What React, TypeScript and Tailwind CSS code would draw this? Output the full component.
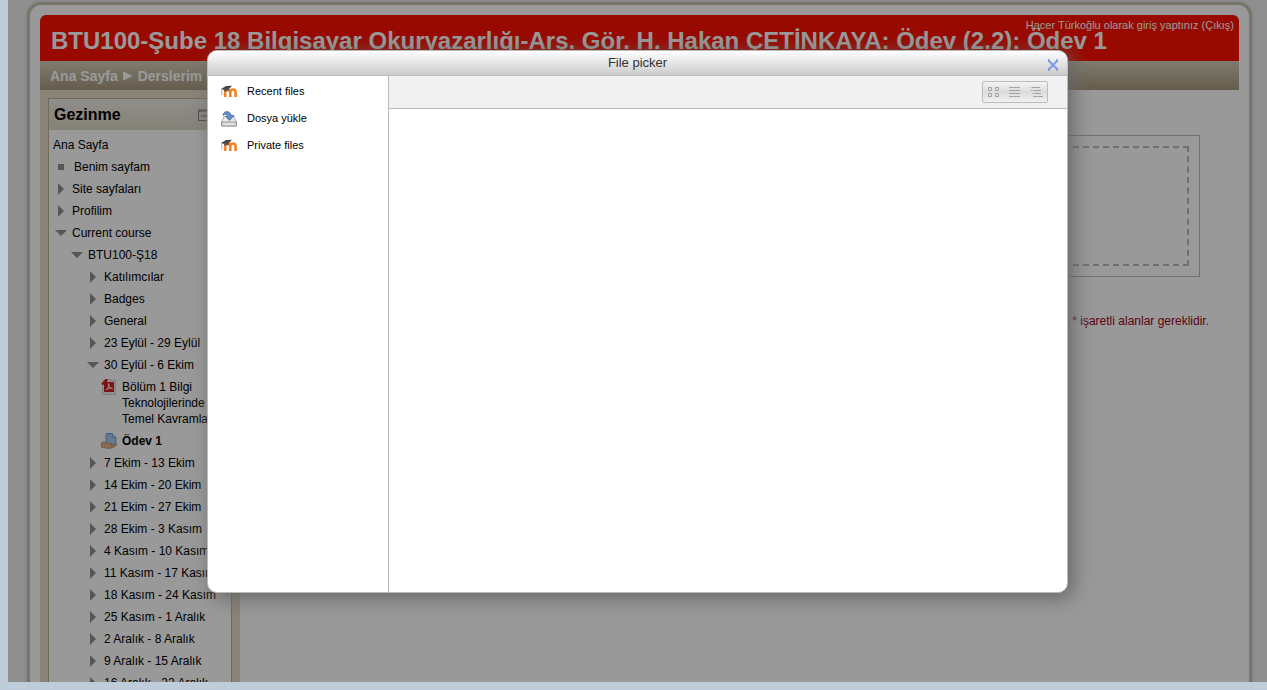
import React from "react";

type NodeKind = "closed" | "open" | "leaf" | "pdf" | "assignment";

interface TreeNode {
  label: string;
  lines?: string[];
  kind: NodeKind;
  current?: boolean;
  children?: TreeNode[];
}

const closed = (label: string): TreeNode => ({ label, kind: "closed" });

const TREE: TreeNode[] = [
  { label: "Benim sayfam", kind: "leaf" },
  closed("Site sayfaları"),
  closed("Profilim"),
  {
    label: "Current course",
    kind: "open",
    children: [
      {
        label: "BTU100-Ş18",
        kind: "open",
        children: [
          closed("Katılımcılar"),
          closed("Badges"),
          closed("General"),
          closed("23 Eylül - 29 Eylül"),
          {
            label: "30 Eylül - 6 Ekim",
            kind: "open",
            children: [
              {
                label: "Bölüm 1",
                lines: ["Bölüm 1 Bilgi", "Teknolojilerinde", "Temel Kavramlar"],
                kind: "pdf",
              },
              { label: "Ödev 1", kind: "assignment", current: true },
            ],
          },
          closed("7 Ekim - 13 Ekim"),
          closed("14 Ekim - 20 Ekim"),
          closed("21 Ekim - 27 Ekim"),
          closed("28 Ekim - 3 Kasım"),
          closed("4 Kasım - 10 Kasım"),
          closed("11 Kasım - 17 Kasım"),
          closed("18 Kasım - 24 Kasım"),
          closed("25 Kasım - 1 Aralık"),
          closed("2 Aralık - 8 Aralık"),
          closed("9 Aralık - 15 Aralık"),
          closed("16 Aralık - 22 Aralık"),
        ],
      },
    ],
  },
];

function NodeIcon({ kind }: { kind: NodeKind }) {
  return (
    <svg className="size-4 shrink-0" viewBox="0 0 16 16" aria-hidden="true">
      {kind === "closed" && <path d="M5 2 L11 8 L5 14 Z" fill="#8f8f8f" />}
      {kind === "open" && <path d="M2 5 H14 L8 11 Z" fill="#8f8f8f" />}
      {kind === "leaf" && <rect x="5" y="5" width="6" height="6" fill="#8f8f8f" />}
      {kind === "pdf" && (
        <>
          <path d="M3 1 H14.5 V15.5 H1.5 V5 Z" fill="#f2f0f0" stroke="#c9c5c5" strokeWidth=".8" />
          <path d="M0 5 L4.5 0 H7 L6 2.5 L2.5 6 Z" fill="#d8231c" />
          <rect x="3" y="3" width="10" height="10" fill="#d31f1f" />
          <path
            d="M5 11 C7.5 9 8 6.500 7.600 4.500 C8 8 9.500 9.300 11.500 9.600 C9 8.800 6.500 9.300 5 11"
            fill="none"
            stroke="#fff"
            strokeWidth=".9"
          />
        </>
      )}
      {kind === "assignment" && (
        <>
          <path d="M5 .6 H11.500 L15 4 V12.500 H5 Z" fill="#a5cbee" stroke="#6c9ccb" strokeWidth=".9" />
          <path d="M11.500 .6 V4 H15" fill="#dcecfa" stroke="#6c9ccb" strokeWidth=".8" />
          <path
            d="M.5 9.500 C3 8.500 5 9.200 7 10.500 L10.500 10.800 C11.500 11.200 11 12.200 10 12.300 L14.500 11.300 C16 11.500 15.800 12.600 14.500 13.300 L9.500 15.300 C6 15.800 4 14.500 .5 14.200 Z"
            fill="#e3b686"
            stroke="#b98450"
            strokeWidth=".7"
          />
        </>
      )}
    </svg>
  );
}

function Tree({ nodes }: { nodes: TreeNode[] }) {
  return (
    <ul>
      {nodes.map((node) => (
        <li key={node.label}>
          <a
            href="#"
            className={`flex py-[3px] leading-4 whitespace-nowrap ${
              node.kind === "closed" || node.kind === "open" ? "gap-[3px]" : "gap-[5px]"
            } ${node.current ? "font-bold" : ""}`}
          >
            <NodeIcon kind={node.kind} />
            <span>
              {node.lines
                ? node.lines.map((line) => (
                    <span key={line} className="block">
                      {line}
                    </span>
                  ))
                : node.label}
            </span>
          </a>
          {node.children && (
            <div className="pl-4">
              <Tree nodes={node.children} />
            </div>
          )}
        </li>
      ))}
    </ul>
  );
}

function MoodleIcon() {
  return (
    <svg className="size-4 shrink-0" viewBox="0 0 16 16" aria-hidden="true">
      <path
        d="M4.200 13 V8.500 C4.200 4.500 9.300 4.500 9.300 8.500 V13 M9.300 8.500 C9.300 4.500 14.600 4.500 14.600 8.500 V13"
        fill="none"
        stroke="#f58220"
        strokeWidth="2.600"
      />
      <path d="M0 5 L5 2 L11 1.800 L7.500 5.600 L2 5.800 Z" fill="#4a4542" />
      <path d="M3 5 H7.500 L7.500 7.500 C6 6.600 4.500 6.800 3.200 7.800 Z" fill="#5c5651" />
      <path d="M.7 5 C.5 7 1.200 8.500 .7 11" fill="none" stroke="#b09a88" strokeWidth=".9" />
    </svg>
  );
}

function UploadIcon() {
  return (
    <svg className="size-4 shrink-0" viewBox="0 0 16 16" aria-hidden="true">
      <path d="M3 5.500 H13 L15.500 11 V15 H.5 V11 Z" fill="#e6e6e6" stroke="#999" strokeWidth=".8" />
      <path d="M.6 11 H15.400 V15 H.6 Z" fill="#cfcfcf" stroke="#929292" strokeWidth=".8" />
      <path d="M2.500 13 H13.500" stroke="#f6f6f6" strokeWidth="1" />
      <path
        d="M2 4.500 C2 1 6 -.5 8.500 1.500 C9.800 2.500 10 3.500 10 4.500 H13 L8.500 9.500 L4.500 5 H6.500 C6.500 3 4 2.500 2 4.500 Z"
        fill="#6690c8"
        stroke="#3f6ba8"
        strokeWidth=".8"
      />
    </svg>
  );
}

const REPOSITORIES = [
  { name: "Recent files", Icon: MoodleIcon },
  { name: "Dosya yükle", Icon: UploadIcon },
  { name: "Private files", Icon: MoodleIcon },
];

const VIEWS = [
  {
    label: "Icon view",
    art: (
      <path d="M1.500 1.500 h3 v3 h-3 Z M8.500 1.500 h3 v3 h-3 Z M1.500 7.500 h3 v3 h-3 Z M8.500 7.500 h3 v3 h-3 Z" />
    ),
  },
  { label: "List view", art: <path d="M1 1.500 H12 M1 4.500 H12 M1 7.500 H12 M1 10.500 H12" /> },
  {
    label: "Tree view",
    art: (
      <path d="M0 1.500 H1 M2 1.500 H10 M1 4.500 H2 M3 4.500 H11 M2 7.500 H3 M4 7.500 H11 M3 10.500 H13" />
    ),
  },
];

function FilePicker() {
  return (
    <section
      role="dialog"
      aria-labelledby="picker-title"
      className="flex h-[543px] w-[861px] flex-col overflow-hidden rounded-[10px] border border-[#bbb] bg-white text-[11px] text-black shadow-[5px_5px_20px_0_#666]"
    >
      <header className="relative flex h-[25px] shrink-0 items-center justify-center border-b border-[#bbb] bg-linear-to-b from-white to-[#ccc]">
        <h2 id="picker-title" className="text-[13px] leading-4 text-[#333]">
          File picker
        </h2>
        <button type="button" aria-label="Close" className="absolute top-2 right-2">
          <svg className="size-3" viewBox="0 0 12 12" aria-hidden="true">
            <path d="M1.500 1.500 L10.500 10.500 M10.500 1.500 L1.500 10.500" stroke="#7d9fe6" strokeWidth="2.200" />
            <path d="M1 1 h1.500 M9.500 1 h1.500 M1 11 h1.500 M9.500 11 h1.500" stroke="#4468c8" strokeWidth="1" />
          </svg>
        </button>
      </header>
      <div className="flex min-h-0 flex-1">
        <nav className="w-[181px] shrink-0 border-r border-[#bbb] py-0.5" aria-label="Repositories">
          <ul>
            {REPOSITORIES.map(({ name, Icon }) => (
              <li key={name}>
                <a href="#" className="flex h-[27px] items-center gap-[10px] pl-[13px]">
                  <Icon />
                  {name}
                </a>
              </li>
            ))}
          </ul>
        </nav>
        <div className="min-w-0 flex-1">
          <div className="flex h-[33px] items-center justify-end border-b border-[#bbb] bg-[#f1f1f1] pr-[19px]">
            <div className="flex h-[22px] w-[66px] rounded-xs border border-[#bbb] bg-linear-to-b from-[#f4f4f4] via-[#dcdcdc] to-[#f1f1f1]">
              {VIEWS.map((view) => (
                <button
                  key={view.label}
                  type="button"
                  aria-label={view.label}
                  className="flex flex-1 items-center justify-center"
                >
                  <svg className="h-3 w-[13px]" viewBox="0 0 13 12" fill="none" stroke="#a3a3a3" aria-hidden="true">
                    {view.art}
                  </svg>
                </button>
              ))}
            </div>
          </div>
        </div>
      </div>
    </section>
  );
}

function NavigationBlock() {
  return (
    <aside className="w-[200px] shrink-0 bg-[#e4dbc8] p-2">
      <div className="border border-[#bfb198] bg-white">
        <div className="flex h-[31px] items-center justify-between bg-linear-to-b from-[#efede7] to-[#dfd8c8] px-[5px]">
          <h2 className="text-base font-bold">Gezinme</h2>
          <div className="flex gap-1">
            <button type="button" aria-label="Collapse block">
              <svg className="size-3" viewBox="0 0 12 12" fill="none" stroke="#7c7c7c" aria-hidden="true">
                <path d="M.5 1 H11.500 V11.500 H.5 Z M.5 2 H11.500 M3 7 H9" />
              </svg>
            </button>
            <button type="button" aria-label="Dock block">
              <svg className="size-3" viewBox="0 0 12 12" fill="none" stroke="#7c7c7c" aria-hidden="true">
                <path d="M.5 1 H11.500 V11.500 H.5 Z M8 3 L4 6.500 L8 10" />
              </svg>
            </button>
          </div>
        </div>
        <div className="px-1 pt-1">
          <a href="#" className="block py-[3px] leading-4">
            Ana Sayfa
          </a>
          <Tree nodes={TREE} />
        </div>
      </div>
    </aside>
  );
}

export default function App() {
  return (
    <div className="flex h-screen flex-col bg-[#bfcddb] pb-2 pl-2 font-['Liberation_Sans',Arial,sans-serif] text-xs text-black">
      <div className="relative min-h-0 flex-1 overflow-hidden bg-[#eee]">
        <div className="mt-0.5 mr-[15px] ml-[19px] rounded-t-[14px] border-[3px] border-b-0 border-[#c8c5b5] bg-white px-[10px] pt-[10px] shadow-[0_0_3px_#c8c5b5]">
          <header className="relative flex h-[46px] items-center overflow-hidden rounded-t-md bg-[#fd0f00] pt-1.5 pl-[11px] text-white">
            <h1 className="text-2xl font-bold whitespace-nowrap">
              BTU100-Şube 18 Bilgisayar Okuryazarlığı-Arş. Gör. H. Hakan ÇETİNKAYA: Ödev (2.2): Ödev 1
            </h1>
            <p className="absolute top-0.5 right-[5px] text-[11px] leading-4">
              <a href="#">Hacer Türkoğlu</a> olarak giriş yaptınız (<a href="#">Çıkış</a>)
            </p>
          </header>
          <nav
            aria-label="Breadcrumb"
            className="flex h-[29px] items-center gap-1 bg-linear-to-b from-[#d5d0bb] to-[#aa997f] pl-[10px] text-sm font-bold text-white"
          >
            <a href="#">Ana Sayfa</a>
            <svg className="h-3 w-3" viewBox="0 0 12 12" aria-hidden="true">
              <path d="M1 1.500 L11 6 L1 10.500 Z" fill="#fff" />
            </svg>
            <a href="#">Derslerim</a>
          </nav>
          <div className="flex">
            <NavigationBlock />
            <main className="min-w-0 flex-1 pt-[45px] pr-[30px] pl-8">
              <div className="mr-[9px] h-[142px] border border-[#bbb] p-[10px]">
                <div className="h-full border-2 border-dashed border-[#bbb]" />
              </div>
              <p className="pt-9 text-right leading-4 text-[#a00020]">
                Bu formda * işaretli alanlar gereklidir.
              </p>
            </main>
          </div>
        </div>
        <div className="absolute inset-0 flex items-start justify-center bg-black/40 pt-[50px]">
          <FilePicker />
        </div>
      </div>
    </div>
  );
}
